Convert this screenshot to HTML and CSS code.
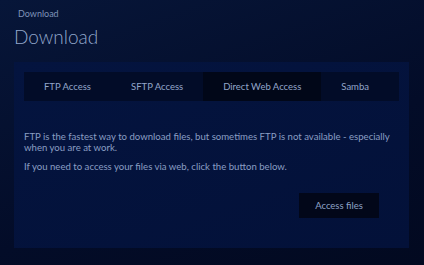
FILE: index.html
```html
<!DOCTYPE html>
<html lang="en">
<head>
    <meta charset="UTF-8">
    <meta name="viewport" content="width=device-width, initial-scale=1.0">
    <title>Download</title>
    <link rel="stylesheet" href="styles.css">
</head>
<body>

    <div class="breadcrumb">Download</div>
    <h1 class="page-title">Download</h1>

    <div class="panel">
        <div class="tabs">
            <div class="tab">FTP Access</div>
            <div class="tab">SFTP Access</div>
            <div class="tab active">Direct Web Access</div>
            <div class="tab">Samba</div>
        </div>

        <div class="tab-content">
            <p>FTP is the fastest way to download files, but sometimes FTP is not available - especially when you are at work.</p>
            <p>If you need to access your files via web, click the button below.</p>
            <div class="actions">
                <button class="button">Access files</button>
            </div>
        </div>
    </div>

</body>
</html>
```

FILE: styles.css
```css
body {
    font-family: 'Lato', sans-serif;
    background: linear-gradient(160deg, #071639 0%, #030c28 60%, #020920 100%);
    color: #8ea2c6;
    margin: 0;
    padding: 0 15px 0 14px;
    height: 265px;
    box-sizing: border-box;
}
.breadcrumb {
    font-size: 9px;
    padding: 8px 0 0 4px;
    height: 13px;
    color: #7f93b8;
}
.page-title {
    font-size: 19px;
    font-weight: 300;
    color: #93a8cc;
    margin: 3px 0 0 0;
    line-height: 26px;
    height: 38px;
}
.panel {
    background: linear-gradient(160deg, #04143f 0%, #031139 100%);
    padding: 10px;
    height: 186px;
    box-sizing: border-box;
}
.tabs {
    display: flex;
    background-color: #020c28;
    height: 29px;
}
.tab {
    padding: 0 20px;
    font-size: 9.5px;
    line-height: 29px;
    color: #93a6ca;
}
.tab.active {
    background-color: #010718;
}
.tab-content {
    padding: 30px 0 0 0;
}
.tab-content p {
    font-size: 9.6px;
    line-height: 11px;
    margin: 0 0 8px 0;
    color: #8a9ec3;
}
.actions {
    display: flex;
    justify-content: flex-end;
    padding: 13px 20px 0 0;
}
.button {
    width: 80px;
    height: 25px;
    background-color: #020719;
    color: #8ea2c6;
    border: none;
    font-family: 'Lato', sans-serif;
    font-size: 9.5px;
    cursor: pointer;
}
```
